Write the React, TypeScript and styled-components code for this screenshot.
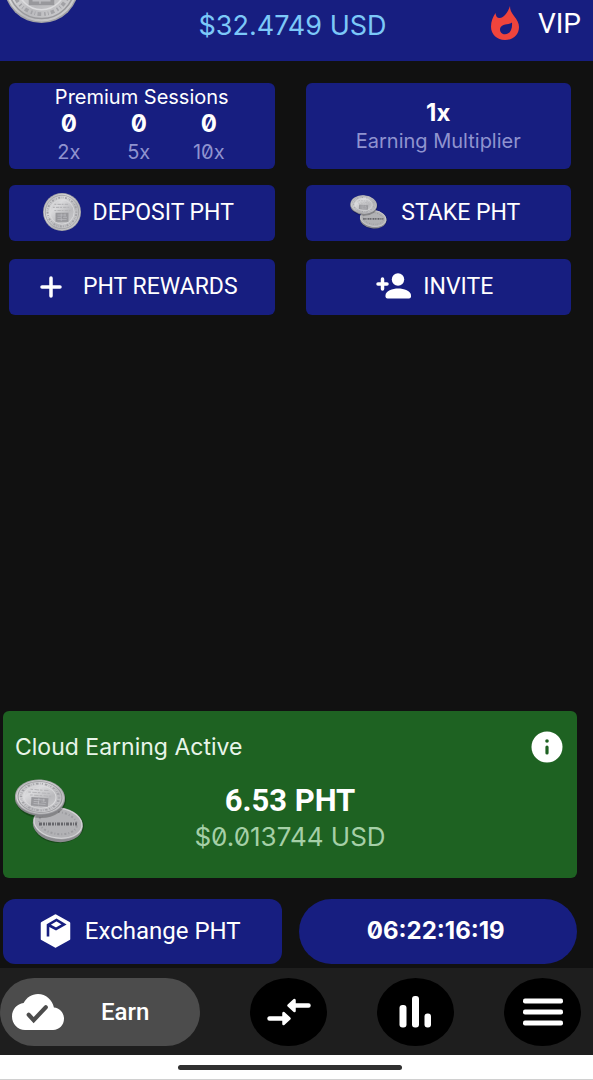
import React, { useId } from "react";
import styled, { createGlobalStyle } from "styled-components";

const GlobalStyle = createGlobalStyle`
  *, *::before, *::after { box-sizing: border-box; }
  body {
    margin: 0;
    background: #111111;
    color: #ffffff;
    font-family: Roboto, "Liberation Sans", sans-serif;
  }
  button { font: inherit; color: inherit; border: 0; padding: 0; cursor: pointer; }
  h2, p, dl, dd, dt { margin: 0; font-weight: 400; }
  svg { display: block; flex: none; }
`;

const wide = `font-family: Inter, "DejaVu Sans", sans-serif; font-feature-settings: "zero" 1;`;

const Page = styled.div`
  display: flex;
  flex-direction: column;
  min-height: 100vh;
`;

const Header = styled.header`
  display: grid;
  grid-template-columns: 1fr auto 1fr;
  height: 61px;
  padding: 0 12px 0 4px;
  background: #171e80;
`;

const Balance = styled.p`
  ${wide}
  font-size: 27px;
  line-height: 52px;
  color: #7cc8f8;
`;

const VipButton = styled.button`
  display: flex;
  align-items: center;
  justify-self: end;
  gap: 18px;
  height: 46px;
  background: none;
  font-size: 28px;
`;

const Tiles = styled.main`
  display: grid;
  grid-template-columns: 1fr 1fr;
  column-gap: 31px;
  row-gap: 18px;
  padding: 22px 22px 24px 9px;
`;

const StatTile = styled.section<{ $centered?: boolean }>`
  display: flex;
  flex-direction: column;
  justify-content: ${(p) => (p.$centered ? "center" : "flex-start")};
  align-items: center;
  height: 86px;
  margin-bottom: -2px;
  padding-top: 1px;
  border-radius: 6px;
  background: #171e80;
`;

const TileTitle = styled.h2`
  ${wide}
  font-size: 20px;
  line-height: 26px;
`;

const Sessions = styled.dl`
  display: grid;
  grid-template-columns: repeat(3, 70px);
  padding-right: 6px;
  text-align: center;
`;

const Session = styled.div`
  display: flex;
  flex-direction: column-reverse;
`;

const StatValue = styled.dd`
  ${wide}
  font-size: 24px;
  font-weight: 700;
  line-height: 28px;
`;

const StatLabel = styled.dt`
  ${wide}
  font-size: 20px;
  line-height: 28px;
  color: #8f93cf;
`;

const Multiplier = styled.dl`
  display: flex;
  flex-direction: column-reverse;
  text-align: center;
`;

const TileButton = styled.button`
  display: flex;
  align-items: center;
  justify-content: center;
  gap: 12px;
  height: 56px;
  padding: 0 7px 2px 0;
  border-radius: 6px;
  background: #171e80;
  font-size: 23px;
`;

const EarningCard = styled.section`
  height: 167px;
  margin: auto 16px 0 3px;
  padding: 18px 12px;
  border-radius: 6px;
  background: #1e6222;
`;

const EarningHead = styled.div`
  display: flex;
  align-items: center;
  justify-content: space-between;
  padding-right: 2px;
`;

const EarningTitle = styled.h2`
  ${wide}
  font-size: 23px;
  line-height: 36px;
  color: #e8f5e9;
`;

const InfoButton = styled.button`
  background: none;
`;

const EarningBody = styled.div`
  display: grid;
  grid-template-columns: 70px 1fr 70px;
  align-items: start;
  padding-top: 14px;
  text-align: center;
`;

const Amount = styled.p`
  padding-top: 4px;
  font-size: 31px;
  font-weight: 700;
  line-height: 36px;
`;

const AmountUsd = styled.p`
  ${wide}
  font-size: 26px;
  line-height: 36px;
  color: #a5cfa7;
`;

const Actions = styled.div`
  display: grid;
  grid-template-columns: 1fr 1fr;
  gap: 17px;
  padding: 21px 16px 4px 3px;
`;

const ActionButton = styled.button<{ $pill?: boolean }>`
  display: flex;
  align-items: center;
  justify-content: center;
  gap: 14px;
  height: 65px;
  padding: 0 4px 2px 0;
  border-radius: ${(p) => (p.$pill ? 33 : 12)}px;
  background: #171e80;
  font-size: 24px;
  font-weight: ${(p) => (p.$pill ? 700 : 400)};
  ${(p) => p.$pill && wide}
`;

const Nav = styled.nav`
  display: flex;
  align-items: center;
  justify-content: space-between;
  height: 87px;
  padding-right: 12px;
  background: #1e1e1e;
`;

const EarnTab = styled.button`
  display: flex;
  align-items: center;
  gap: 37px;
  width: 200px;
  height: 68px;
  padding-left: 12px;
  border-radius: 34px;
  background: #4c4c4c;
  font-size: 24px;
  font-weight: 500;
`;

const RoundTab = styled.button`
  display: grid;
  place-items: center;
  width: 77px;
  height: 68px;
  border-radius: 50%;
  background: #000000;
`;

const SystemBar = styled.footer`
  display: flex;
  justify-content: center;
  height: 25px;
  padding: 10px 13px 0 0;
  background: #ffffff;
  border-bottom: 1px solid #d0d0d0;
`;

const HomeHandle = styled.div`
  width: 224px;
  height: 5px;
  border-radius: 3px;
  background: #303030;
`;

function CoinFace({ gradient }: { gradient: string }) {
  return (
    <g>
      <circle r="50" fill="#a2a2a5" />
      <circle r="48" fill={`url(#${gradient})`} />
      <circle r="44" fill="none" stroke="#9a9a9d" strokeWidth="2" />
      <circle r="38" fill="none" stroke="#a2a2a6" strokeWidth="5" strokeDasharray="2 4 5 3 1 3" />
      <circle r="32" fill="none" stroke="#dcdcde" strokeWidth="2" />
      <path d="M-20 -20h38M-24 -12h46M-20 -4h42" stroke="#b4b4b7" strokeWidth="3" strokeDasharray="5 3 9 2" />
      <rect x="-17" y="2" width="34" height="24" fill="#98989c" />
      <path d="M-12 8h22M-12 14h9M3 14h10M-12 20h24M-2 4v20M8 4v8" stroke="#bcbcc0" strokeWidth="2" />
    </g>
  );
}

function CoinGradient({ id }: { id: string }) {
  return (
    <linearGradient id={id} x1="0" y1="0" x2="1" y2="1">
      <stop offset="0" stopColor="#b0b0b3" />
      <stop offset="0.35" stopColor="#dadadc" />
      <stop offset="0.6" stopColor="#bababd" />
      <stop offset="1" stopColor="#d4d4d6" />
    </linearGradient>
  );
}

function HeaderCoin() {
  const id = useId();
  return (
    <svg width="75" height="23" viewBox="-50 19 100 31" preserveAspectRatio="none" aria-hidden="true">
      <defs><CoinGradient id={id} /></defs>
      <CoinFace gradient={id} />
    </svg>
  );
}

function Coin() {
  const id = useId();
  return (
    <svg width="38" height="38" viewBox="-50 -50 100 100" aria-hidden="true">
      <defs><CoinGradient id={id} /></defs>
      <CoinFace gradient={id} />
    </svg>
  );
}

function CoinPair({ width, height }: { width: number; height: number }) {
  const id = useId();
  return (
    <svg width={width} height={height} viewBox="1 0 70 64" aria-hidden="true">
      <defs><CoinGradient id={id} /></defs>
      <ellipse cx="45" cy="47" rx="25" ry="17" fill="#000000" opacity="0.25" />
      <g transform="translate(44 44) rotate(8)">
        <ellipse cy="2" rx="25" ry="17" fill="#8c8c90" />
        <ellipse rx="25" ry="16" fill="#b2b2b5" />
        <ellipse rx="24" ry="15" fill="none" stroke="#d6d6d8" />
        <ellipse rx="19" ry="11" fill="none" stroke="#9c9ca0" strokeWidth="2" strokeDasharray="2 2 1 2" />
        <path d="M-19 1h38" stroke="#66666b" strokeWidth="3" strokeDasharray="3 1 2 1 1 1" transform="rotate(-8)" />
      </g>
      <ellipse cx="27" cy="21" rx="25" ry="18" fill="#000000" opacity="0.25" />
      <g transform="translate(26 18) rotate(4)">
        <ellipse cy="2" rx="25" ry="17" fill="#858589" />
        <g transform="scale(0.5 0.35)"><CoinFace gradient={id} /></g>
      </g>
    </svg>
  );
}

function Flame() {
  return (
    <svg width="29" height="35" viewBox="0 0 29 35" aria-hidden="true">
      <path d="M19 0C19 4 20 6 23 10c3 4 5 7 5 11 0 8-6 13-14 13S0 28.500 0 20.500C0 15 2 11 4.500 7c.3 3 1.500 5 4 5C13 12 17 6 19 0z" fill="#f0443c" />
      <path d="M21 16.500C18 19 9 17.500 9 23.500c0 3 2.200 4.800 5 4.800 5 0 7.500-5 7-11.800z" fill="#171e80" />
    </svg>
  );
}

function Plus() {
  return (
    <svg width="32" height="24" viewBox="0 0 32 24" stroke="#ffffff" strokeWidth="3.5" strokeLinecap="round" aria-hidden="true">
      <path d="M3 13h18M12 4v18" />
    </svg>
  );
}

function PersonAdd() {
  return (
    <svg width="35" height="26" viewBox="0 0 35 26" fill="#ffffff" aria-hidden="true">
      <circle cx="22" cy="6.5" r="6.2" />
      <path d="M9.5 22.5c0-4.800 7-7 12.700-7s12.800 2.200 12.800 7v1q0 2-2 2H11.500q-2 0-2-2z" />
      <path d="M2 11h9M6.500 6v10" stroke="#ffffff" strokeWidth="3.5" strokeLinecap="round" />
    </svg>
  );
}

function Info() {
  return (
    <svg width="32" height="32" viewBox="0 0 32 32" aria-hidden="true">
      <circle cx="16" cy="16" r="15.5" fill="#ffffff" />
      <circle cx="16" cy="10" r="1.8" fill="#1e6222" />
      <path d="M16 16v6" stroke="#1e6222" strokeWidth="3.2" strokeLinecap="round" />
    </svg>
  );
}

function HexLogo() {
  return (
    <svg width="31" height="34" viewBox="0 0 30 34" aria-hidden="true">
      <path d="M15 1.500 28.500 9v16L15 32.500 1.500 25V9z" fill="#ffffff" stroke="#ffffff" strokeWidth="2.5" strokeLinejoin="round" />
      <path d="M7.500 22.500V11l8.500-5 7.500 4.500-8 4.500-7.500-4" fill="none" stroke="#171e80" strokeWidth="2.600" strokeLinejoin="miter" />
    </svg>
  );
}

function CloudDone() {
  return (
    <svg width="52" height="36" viewBox="0 4 24 16" preserveAspectRatio="none" aria-hidden="true">
      <path d="M19.350 10.040C18.670 6.590 15.640 4 12 4 9.110 4 6.600 5.640 5.350 8.040 2.340 8.360 0 10.910 0 14c0 3.310 2.690 6 6 6h13c2.760 0 5-2.240 5-5 0-2.640-2.050-4.780-4.650-4.960z" fill="#ffffff" />
      <path d="M7.700 13.200 10 15.600l5.600-5.700" fill="none" stroke="#4c4c4c" strokeWidth="1.9" strokeLinecap="round" />
    </svg>
  );
}

function CompareArrows() {
  return (
    <svg width="44" height="32" viewBox="0 0 44 32" fill="#ffffff" stroke="#ffffff" strokeLinecap="round" strokeLinejoin="round" aria-hidden="true">
      <path d="M2.500 22.500H18M26 9.500h15.500" strokeWidth="4.500" />
      <path d="M16.500 17v11l6-5.500zM27.500 4v11l-6-5.500z" strokeWidth="2.500" />
    </svg>
  );
}

function Bars() {
  return (
    <svg width="33" height="32" viewBox="0 0 33 32" fill="#ffffff" aria-hidden="true">
      <rect x="0.5" y="9" width="7" height="22.5" rx="3" />
      <rect x="13" y="0" width="7" height="31.5" rx="3" />
      <rect x="25.5" y="17.5" width="6.5" height="14" rx="3" />
    </svg>
  );
}

function MenuIcon() {
  return (
    <svg width="40" height="28" viewBox="0 0 40 28" fill="#ffffff" aria-hidden="true">
      <rect y="0.5" width="40" height="5" rx="2" />
      <rect y="11.500" width="40" height="5" rx="2" />
      <rect y="22.500" width="40" height="5" rx="2" />
    </svg>
  );
}

const sessions = [
  { label: "2x", count: 0 },
  { label: "5x", count: 0 },
  { label: "10x", count: 0 },
];

export default function App() {
  return (
    <Page>
      <GlobalStyle />
      <Header>
        <HeaderCoin />
        <Balance>$32.4749 USD</Balance>
        <VipButton type="button">
          <Flame />
          VIP
        </VipButton>
      </Header>

      <Tiles>
        <StatTile>
          <TileTitle>Premium Sessions</TileTitle>
          <Sessions>
            {sessions.map((s) => (
              <Session key={s.label}>
                <StatLabel>{s.label}</StatLabel>
                <StatValue>{s.count}</StatValue>
              </Session>
            ))}
          </Sessions>
        </StatTile>
        <StatTile $centered>
          <Multiplier>
            <StatLabel>Earning Multiplier</StatLabel>
            <StatValue>1x</StatValue>
          </Multiplier>
        </StatTile>
        <TileButton type="button"><Coin />DEPOSIT PHT</TileButton>
        <TileButton type="button"><CoinPair width={40} height={34} />STAKE PHT</TileButton>
        <TileButton type="button"><Plus />PHT REWARDS</TileButton>
        <TileButton type="button"><PersonAdd />INVITE</TileButton>
      </Tiles>

      <EarningCard>
        <EarningHead>
          <EarningTitle>Cloud Earning Active</EarningTitle>
          <InfoButton type="button" aria-label="About cloud earning"><Info /></InfoButton>
        </EarningHead>
        <EarningBody>
          <CoinPair width={70} height={64} />
          <div>
            <Amount>6.53 PHT</Amount>
            <AmountUsd>$0.013744 USD</AmountUsd>
          </div>
        </EarningBody>
      </EarningCard>

      <Actions>
        <ActionButton type="button"><HexLogo />Exchange PHT</ActionButton>
        <ActionButton type="button" $pill>06:22:16:19</ActionButton>
      </Actions>

      <Nav>
        <EarnTab type="button"><CloudDone />Earn</EarnTab>
        <RoundTab type="button" aria-label="Swap"><CompareArrows /></RoundTab>
        <RoundTab type="button" aria-label="Statistics"><Bars /></RoundTab>
        <RoundTab type="button" aria-label="Menu"><MenuIcon /></RoundTab>
      </Nav>
      <SystemBar><HomeHandle /></SystemBar>
    </Page>
  );
}
